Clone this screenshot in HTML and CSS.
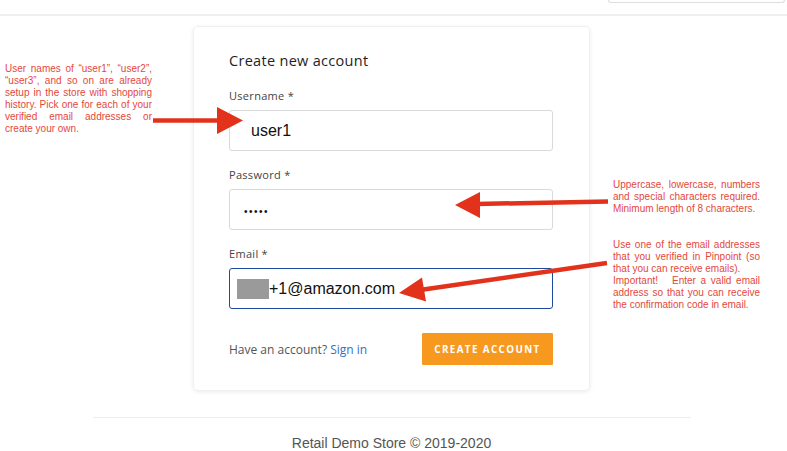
FILE: index.html
```html
<!DOCTYPE html>
<html lang="en">
<head>
<meta charset="utf-8">
<title>Create new account</title>
<link rel="stylesheet" href="styles.css">
</head>
<body>
<header class="topbar">
  <div class="top-field"></div>
</header>
<main class="page">
  <section class="card">
    <h1 class="card-title">Create new account</h1>
    <div class="field">
      <label class="field-label">Username *</label>
      <div class="input"><span class="indent">user1</span></div>
    </div>
    <div class="field">
      <label class="field-label">Password *</label>
      <div class="input dots">•••••</div>
    </div>
    <div class="field">
      <label class="field-label">Email *</label>
      <div class="input focused"><span class="redact"></span>+1@amazon.com</div>
    </div>
    <div class="actions">
      <p class="signin">Have an account? <a class="link">Sign in</a></p>
      <button class="btn">CREATE ACCOUNT</button>
    </div>
  </section>
  <footer class="footer">Retail Demo Store © 2019-2020</footer>
</main>

<div class="note note-left">
  <span class="j">User names of “user1”, “user2”,</span>
  <span class="j">“user3”, and so on are already</span>
  <span class="j">setup in the store with shopping</span>
  <span class="j">history. Pick one for each of your</span>
  <span class="j">verified email addresses or</span>
  <span>create your own.</span>
</div>
<div class="note note-pass">
  <span class="j">Uppercase, lowercase, numbers</span>
  <span class="j">and special characters required.</span>
  <span>Minimum length of 8 characters.</span>
</div>
<div class="note note-email">
  <span class="j">Use one of the email addresses</span>
  <span class="j">that you verified in Pinpoint (so</span>
  <span>that you can receive emails).</span>
  <span class="j">Important!&nbsp;&nbsp; Enter a valid email</span>
  <span class="j">address so that you can receive</span>
  <span>the confirmation code in email.</span>
</div>

<svg class="arrows" width="787" height="451" viewBox="0 0 787 451" aria-hidden="true">
  <g fill="#e2321c" stroke="#e2321c">
    <line x1="153" y1="120.5" x2="222" y2="120.5" stroke-width="4.5"/>
    <polygon points="217,107 243,120.5 217,134" stroke="none"/>
    <line x1="608" y1="201.5" x2="476" y2="204" stroke-width="4.5"/>
    <polygon points="480,192 455,205 480,218" stroke="none"/>
    <line x1="607" y1="263" x2="420" y2="290" stroke-width="4.5"/>
    <polygon points="399,293 422,277.5 426,301.5" stroke="none"/>
  </g>
</svg>
</body>
</html>
```

FILE: styles.css
```css
* { box-sizing: border-box; }
html, body { margin: 0; padding: 0; }
body {
  width: 787px;
  height: 451px;
  overflow: hidden;
  background: #fff;
  font-family: "Liberation Sans", Arial, sans-serif;
  color: #222;
  position: relative;
}
.topbar {
  height: 16px;
  border-bottom: 2px solid #efefef;
  display: flex;
  justify-content: flex-end;
  align-items: flex-start;
  padding-right: 2px;
}
.top-field {
  width: 177px;
  height: 3px;
  border: 1px solid #dedede;
  border-top: none;
  border-radius: 0 0 3px 3px;
}
.page {
  padding-right: 4px;
  display: flex;
  flex-direction: column;
  align-items: center;
}
.card {
  margin-top: 10px;
  width: 397px;
  height: 365px;
  padding: 25px 36px 0 35px;
  border: 1px solid #f0f0f0;
  border-radius: 5px;
  box-shadow: 0 1px 4px rgba(0,0,0,0.08);
  display: flex;
  flex-direction: column;
}
.card-title {
  margin: 0;
  font-family: "Open Sans", sans-serif;
  font-weight: 500;
  font-size: 14.5px;
  line-height: 18px;
  color: #1e1e1e;
  letter-spacing: 0.3px;
}
.field {
  display: flex;
  flex-direction: column;
  gap: 7px;
  margin-top: 17px;
}
.field:first-of-type { margin-top: 19px; }
.field-label {
  font-family: "Open Sans", sans-serif;
  font-size: 11px;
  line-height: 14px;
  color: #444;
  letter-spacing: 0.3px;
}
.input {
  height: 41px;
  border: 1px solid #d9d9d9;
  border-radius: 3px;
  padding-left: 14px;
  display: flex;
  align-items: center;
  font-size: 16px;
  color: #111;
}
.indent { margin-left: 7px; }
.dots { font-size: 10px; letter-spacing: 1.5px; padding-top: 3px; }
.focused {
  border: 1.5px solid #1d4a9c;
  padding-left: 7px;
}
.redact {
  display: inline-block;
  width: 32px;
  height: 20px;
  background: #9a9a9a;
}
.actions {
  margin-top: 24px;
  display: flex;
  justify-content: space-between;
  align-items: center;
}
.signin {
  margin: 0;
  font-family: "Open Sans", sans-serif;
  font-size: 12px;
  color: #555;
}
.link { color: #2f72c4; }
.btn {
  width: 131px;
  height: 32px;
  border: none;
  border-radius: 1px;
  background: #f8991f;
  color: #fff;
  font-family: "Open Sans", sans-serif;
  font-weight: 700;
  font-size: 9.8px;
  letter-spacing: 1.4px;
  padding: 0;
}
.footer {
  margin-top: 26px;
  width: 598px;
  border-top: 1px solid #eeeeee;
  padding-top: 17px;
  text-align: center;
  font-size: 14px;
  line-height: 16px;
  color: #555;
}
.note {
  position: absolute;
  width: 147px;
  font-family: "Liberation Sans", Arial, sans-serif;
  font-size: 10px;
  line-height: 12px;
  color: #e4483d;
}
.note span { display: block; white-space: nowrap; }
.note span.j {
  white-space: normal;
  text-align: justify;
  text-align-last: justify;
}
.note-left { left: 5px; top: 63px; }
.note-pass { left: 613px; top: 179px; }
.note-email { left: 613px; top: 239px; }
.arrows {
  position: absolute;
  left: 0;
  top: 0;
  pointer-events: none;
}
```
